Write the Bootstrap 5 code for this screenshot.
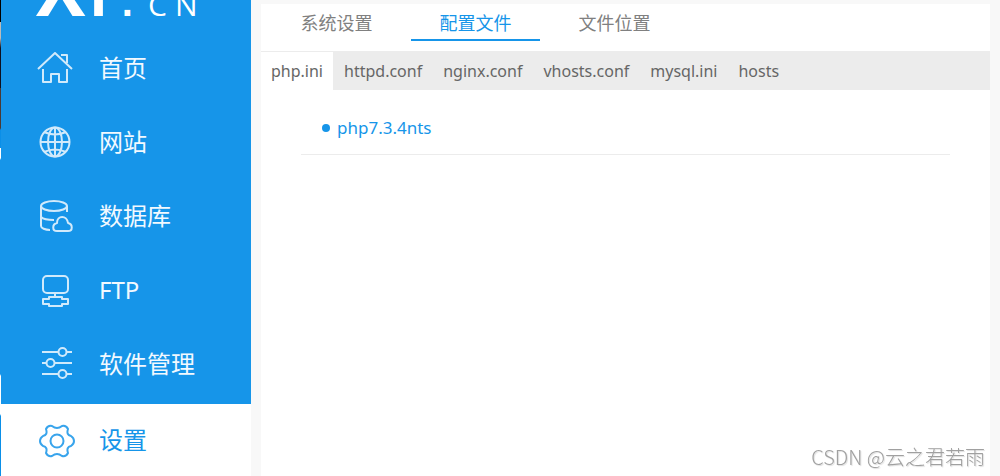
<!DOCTYPE html>
<html lang="zh-CN">
<head>
<meta charset="utf-8">
<meta name="viewport" content="width=device-width, initial-scale=1">
<title>配置文件</title>
<link href="https://cdn.jsdelivr.net/npm/bootstrap@5.3.0/dist/css/bootstrap.min.css" rel="stylesheet">
<style>
  :root { --brand: #1695e9; }
  body { background: #f8f8f8; font-family: "Noto Sans", "Noto Sans CJK SC", sans-serif; color: #666; }
  a { text-decoration: none; }
  .edge { width: 1px; background: linear-gradient(#000 0 22px, #bbb 22px 38px, #0d1020 48px 88px, #4a3a34 88px 128px, #0a8fe8 130px 148px, #fff 148px 158px, #1695e9 160px 374px, #fff 376px 414px, #0a8fe8 416px); }
  .sidebar { width: 250px; background: var(--brand); }
  .brand { height: 34px; padding-left: 35px; }
  .brand-name { margin-top: -29px; color: #fff; line-height: 34px; }
  .brand-big { font: 700 74px/34px "Open Sans", sans-serif; }
  .brand-big.stem { font-weight: 600; margin-left: 2px; }
  .brand-dot { font: 700 40px/34px "Liberation Sans", sans-serif; margin-left: -11px; }
  .brand-small { font: 400 30px/34px "Open Sans", sans-serif; }
  .brand-small.first { margin-left: 15px; }
  .side-link { height: 74px; padding: 0 20px 6px 36px; gap: 22px; color: #f2f9ff; font: 24px/36px "Noto Sans", "Noto Sans CJK SC", sans-serif; }
  .side-link:hover { color: #fff; }
  .side-link.active { height: 72px; padding-bottom: 0; background: #fff; color: var(--brand); }
  .side-link svg { width: 40px; height: 36px; fill: none; stroke: currentColor; stroke-width: 2; stroke-linejoin: round; flex: none; opacity: .85; }
  .panel { margin: 4px 10px 0; background: #fff; }
  .top-tabs { height: 48px; padding-left: 11px; gap: 10px; border-bottom: 1px solid #ececec; }
  .top-tabs a { width: 129px; height: 37px; color: #808080; font-size: 18px; line-height: 38px; text-align: center; }
  .top-tabs a.active { color: var(--brand); border-bottom: 2px solid var(--brand); }
  .file-tabs { background: #ececec; height: 38px; gap: 1px; }
  .file-tabs a { padding: 0 10px; color: #666; font-size: 16px; line-height: 38px; }
  .file-tabs a.active { background: #fff; }
  .versions { margin: 0 40px; }
  .versions li { height: 65px; padding: 11px 20px 0; border-bottom: 1px solid #ececec; }
  .versions a { color: var(--brand); font-size: 17px; line-height: 26px; gap: 7px; }
  .dot { width: 8px; height: 8px; margin-left: 1px; border-radius: 50%; background: var(--brand); }
  .watermark { right: 15px; bottom: 5px; color: #a0a0a0; font: 300 20px/28px "Noto Sans CJK SC", sans-serif; text-shadow: 1px 1px 1px #ddd; }
</style>
</head>
<body>
<div class="d-flex min-vh-100">
  <div class="edge"></div>
  <aside class="sidebar flex-shrink-0">
    <a href="#" class="brand d-block overflow-hidden"><span class="brand-name d-flex align-items-baseline"><span class="brand-big">X</span><span class="brand-big stem">P</span><span class="brand-dot">.</span><span class="brand-small first">C</span><span class="brand-small ms-2">N</span></span></a>
    <nav>
      <a href="#" class="side-link d-flex align-items-center">
        <svg viewBox="0 0 40 36"><path d="M1 19 18 3l17 16M6 19v13h8v-8h8v8h8V19M24 5h6v8" /></svg>首页</a>
      <a href="#" class="side-link d-flex align-items-center">
        <svg viewBox="0 0 40 36"><circle cx="18" cy="18" r="14.500"/><ellipse cx="18" cy="18" rx="7" ry="14.500"/><path d="M18 3v30M3 18h30M7 8q11 5 22 0M7 28q11-5 22 0"/></svg>网站</a>
      <a href="#" class="side-link d-flex align-items-center">
        <svg viewBox="0 0 40 36"><ellipse cx="17" cy="8" rx="13" ry="5"/><path d="M4 8v20c0 2 4 4 9 4M30 8v6M4 19c2 2 7 3 13 3M20 33c-5 0-5-7 0-8 0-8 10-8 11 0 5 1 5 8 0 8Z"/></svg>数据库</a>
      <a href="#" class="side-link d-flex align-items-center">
        <svg viewBox="0 0 40 36"><rect x="6" y="4" width="25" height="17" rx="4"/><path d="M18 21v4M12 25h13v2h6v5h-6v2H12v-2H6v-5h6Z"/></svg>FTP</a>
      <a href="#" class="side-link d-flex align-items-center">
        <svg viewBox="0 0 40 36"><path d="M5 6h16M30 6h5M5 17h4M18 17h17M5 28h16M30 28h5"/><circle cx="25.500" cy="6" r="4"/><circle cx="13.500" cy="17" r="4"/><circle cx="25.500" cy="28" r="4"/></svg>软件管理</a>
      <a href="#" class="side-link active d-flex align-items-center">
        <svg viewBox="0 0 40 36"><circle cx="20" cy="19" r="6.500"/><path d="M15 4Q20 8 25 4Q29 3 31 7Q29 13 34 14Q37 16 37 19Q37 22 34 24Q29 25 31 31Q29 35 25 34Q20 30 15 34Q11 35 9 31Q11 25 6 24Q3 22 3 19Q3 16 6 14Q11 13 9 7Q11 3 15 4Z"/></svg>设置</a>
    </nav>
  </aside>
  <main class="panel flex-grow-1">
    <nav class="top-tabs d-flex">
      <a href="#">系统设置</a>
      <a href="#" class="active">配置文件</a>
      <a href="#">文件位置</a>
    </nav>
    <nav class="file-tabs d-flex">
      <a href="#" class="active">php.ini</a>
      <a href="#">httpd.conf</a>
      <a href="#">nginx.conf</a>
      <a href="#">vhosts.conf</a>
      <a href="#">mysql.ini</a>
      <a href="#">hosts</a>
    </nav>
    <ul class="versions list-unstyled">
      <li class="d-flex align-items-center"><a href="#" class="d-flex align-items-center"><span class="dot"></span>php7.3.4nts</a></li>
    </ul>
  </main>
</div>
<div class="watermark position-fixed">CSDN @云之君若雨</div>
<script src="https://cdn.jsdelivr.net/npm/bootstrap@5.3.0/dist/js/bootstrap.bundle.min.js"></script>
</body>
</html>
